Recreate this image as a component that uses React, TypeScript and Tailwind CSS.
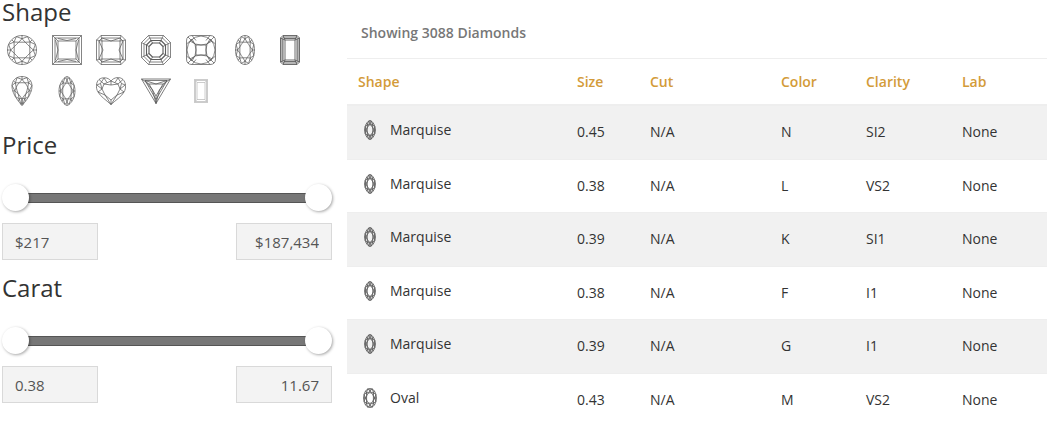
import React, { useState } from "react";

type Point = [number, number];
type Curve = (t: number, scale: number) => Point;

const TAU = Math.PI * 2;

const toPoints = (points: Point[]) =>
  points.map(([x, y]) => `${x.toFixed(2)},${y.toFixed(2)}`).join(" ");

// t runs clockwise from the top of the stone
const round: Curve = (t, s) => [15 + 14.5 * s * Math.sin(t), 15 - 14.5 * s * Math.cos(t)];
const oval: Curve = (t, s) => [15 + 9.5 * s * Math.sin(t), 15 - 14.5 * s * Math.cos(t)];
const marquise: Curve = (t, s) => [
  15 + 8 * s * Math.sin(t) * Math.abs(Math.sin(t)) ** 0.4,
  15 - 14.5 * s * Math.cos(t),
];
const pear: Curve = (t, s) => [
  15 + 13 * s * Math.sin(t) * Math.cos(t > Math.PI ? (TAU - t) / 2 : t / 2),
  14 + s - 14.5 * s * Math.cos(t),
];

const Brilliant = ({ curve }: { curve: Curve }) => {
  const outline = Array.from({ length: 64 }, (_, i) => curve((i * TAU) / 64, 1));
  const table = Array.from({ length: 16 }, (_, i) => curve((i * TAU) / 16, i % 2 ? 0.58 : 0.54));
  return (
    <>
      <polygon points={toPoints(outline)} />
      <polygon points={toPoints(table)} />
      {Array.from({ length: 8 }, (_, i) => {
        const at = (n: number, s: number) => curve((((n + 16) % 16) * TAU) / 16, s);
        const n = i * 2;
        return (
          <React.Fragment key={i}>
            <polyline points={toPoints([at(n - 1, 0.58), at(n, 0.78), at(n + 1, 0.58)])} />
            <polyline points={toPoints([at(n - 1, 1), at(n, 0.78), at(n + 1, 1)])} />
            <polyline points={toPoints([at(n, 0.78), at(n, 1)])} />
          </React.Fragment>
        );
      })}
    </>
  );
};

const drawings: Record<string, React.ReactNode> = {
  Round: <Brilliant curve={round} />,
  Princess: (
    <path d="M.5.5h29v29H.5zM3 3h24v24H3zM6 6h18v18H6zM.5.5 6 6M29.5.5 24 6M.5 29.5 6 24M29.5 29.5 24 24M6 3.5 15 5.500 24 3.500M6 26.500l9-2 9 2M3.500 5 6 15 3.500 25M26.500 5 24 15l2.500 10" />
  ),
  Radiant: (
    <path d="M5 .5h20l4.500 4.500v20L25 29.500H5L.5 25V5zM6 3h18l3 3v18l-3 3H6l-3-3V6zM6 6h18v18H6zM5 .5 6 6 .5 5M25 .5 24 6l5.500-1M5 29.500 6 24l-5.500 1M25 29.500 24 24l5.500 1M6 3l9 3 9-3M6 27l9-3 9 3M3 6l4 9-4 9M27 6l-4 9 4 9" />
  ),
  Asscher: (
    <>
      <path d="M7.500.5h15l7 7v15l-7 7h-15l-7-7v-15zM8.500 3h13l5.500 5.500v13L21.500 27h-13L3 21.500v-13z" />
      <path
        strokeWidth="1.1"
        d="M10 5.500h10l4.500 4.500v10L20 24.500H10L5.500 20V10zM11.500 8h7l3.500 3.500v7L18.500 22h-7L8 18.500v-7z"
      />
      <path d="m7.500.5 4 7.500M22.500.5l-4 7.500M29.500 7.500l-7.500 4M29.500 22.500l-7.500-4M22.500 29.500l-4-7.500M7.500 29.500l4-7.500M.5 22.500l7.500-4M.5 7.500l7.500 4" />
    </>
  ),
  Cushion: (
    <path d="M6 .5h18q5.500 0 5.500 5.500v18q0 5.500-5.500 5.500H6Q.5 29.500.5 24V6Q.5.5 6 .5zM10 10h10v10H10zM4 6Q9 1 15 1t11 5q-5 4-11 4T4 6zM4 24q5-4 11-4t11 4q-5 5-11 5T4 24zM6 4Q1 9 1 15t5 11q4-5 4-11T6 4zM24 4q5 5 5 11t-5 11q-4-5-4-11t4-11zM2 2l8 8M28 2l-8 8M2 28l8-8M28 28l-8-8M6 .5l4 5M24 .5l-4 5M6 29.500l4-5M24 29.500l-4-5M.5 9 4 6M29.500 9 26 6M.5 21 4 24M29.500 21 26 24" />
  ),
  Oval: <Brilliant curve={oval} />,
  Emerald: (
    <path
      strokeWidth="0.9"
      d="M8 .5h14l2.500 2.500v24L22 29.500H8L5.500 27V3zM8.500 2h13L23 3.500v23L21.500 28h-13L7 26.500v-23zM9 3.500h12l1 1v21l-1 1H9l-1-1v-21zM10 5h10v20H10zM8 .5 10 5 5.500 3M22 .5 20 5l4.500-2M8 29.500l2-4.500-4.500 2M22 29.500l-2-4.500 4.500 2"
    />
  ),
  Pear: <Brilliant curve={pear} />,
  Marquise: <Brilliant curve={marquise} />,
  Heart: (
    <path d="M15 5C12 1 6 1 3 3.500S-.5 12 2 16c2.500 4.500 8 8 13 12.500C20 24 25.500 20.500 28 16c2.500-4 2-9.500-1-12.500S18 1 15 5zM8 8l7 1 7-1 2 5-3 6-6 5-6-5-3-6zM15 5v4M15 5 8 8 3 3.500M15 5l7 3 5-4.500M8 2 4.500 7.500.8 9M22 2l3.500 5.500L29.200 9M8 2l3 4.500M22 2l-3 4.500M.8 9 6 13 2 16M29.200 9 24 13l4 3M4.500 7.500 6 13M25.500 7.500 24 13M2 16l7 3 6 9.500M28 16l-7 3-6 9.500M15 24v4.500" />
  ),
  Trillion: (
    <path
      strokeWidth="0.8"
      d="M.5 3h29L15 27.500zM4 4.500h22L15 23.500zM8 8h14L15 20zM.5 3 8 8M29.500 3 22 8M15 27.500V20M4 4.500 15 8l11-3.500M4 4.500 11.500 14 15 27.500 18.500 14 26 4.500"
    />
  ),
  Baguette: (
    <path
      stroke="#bbbbbb"
      d="M8.500 3.500h13v23h-13zM11 6.500h8v17h-8zM9.500 4.500h11v21h-11zM8.500 3.500l2.500 3M21.500 3.500l-2.500 3M8.500 26.500l2.500-3M21.500 26.500l-2.500-3"
    />
  ),
};

interface GemIconProps {
  shape: string;
  className?: string;
  strokeWidth?: number;
}

const GemIcon = ({ shape, className, strokeWidth = 0.75 }: GemIconProps) => (
  <svg
    viewBox="0 0 30 30"
    className={className}
    fill="none"
    stroke="#5c5c5c"
    strokeWidth={strokeWidth}
    strokeLinejoin="round"
    aria-hidden="true"
  >
    {drawings[shape]}
  </svg>
);

const shapes = [
  "Round",
  "Princess",
  "Radiant",
  "Asscher",
  "Cushion",
  "Oval",
  "Emerald",
  "Pear",
  "Marquise",
  "Heart",
  "Trillion",
  "Baguette",
];

const diamonds = [
  { id: 1, shape: "Marquise", size: "0.45", cut: "N/A", color: "N", clarity: "SI2", lab: "None" },
  { id: 2, shape: "Marquise", size: "0.38", cut: "N/A", color: "L", clarity: "VS2", lab: "None" },
  { id: 3, shape: "Marquise", size: "0.39", cut: "N/A", color: "K", clarity: "SI1", lab: "None" },
  { id: 4, shape: "Marquise", size: "0.38", cut: "N/A", color: "F", clarity: "I1", lab: "None" },
  { id: 5, shape: "Marquise", size: "0.39", cut: "N/A", color: "G", clarity: "I1", lab: "None" },
  { id: 6, shape: "Oval", size: "0.43", cut: "N/A", color: "M", clarity: "VS2", lab: "None" },
];

const rangeClass =
  "pointer-events-none absolute inset-0 h-full w-full appearance-none bg-transparent outline-none [&::-webkit-slider-thumb]:pointer-events-auto [&::-webkit-slider-thumb]:h-[27px] [&::-webkit-slider-thumb]:w-[27px] [&::-webkit-slider-thumb]:cursor-pointer [&::-webkit-slider-thumb]:appearance-none [&::-webkit-slider-thumb]:rounded-full [&::-webkit-slider-thumb]:bg-white [&::-webkit-slider-thumb]:shadow-[1px_1px_3px_rgba(0,0,0,0.35)]";

const fieldClass =
  "h-[37px] w-24 border border-[#d9d9d9] bg-[#f3f3f3] px-3 text-[15px] text-[#555555] outline-none";

interface RangeFilterProps {
  title: string;
  min: number;
  max: number;
  step: number;
  format: (value: number) => string;
}

const RangeFilter: React.FC<RangeFilterProps> = ({ title, min, max, step, format }) => {
  const [low, setLow] = useState(min);
  const [high, setHigh] = useState(max);

  return (
    <section className="pl-0.5">
      <h2 className="text-2xl leading-6">{title}</h2>
      <div className="relative mt-[27px] flex h-[27px] items-center px-3">
        <div className="h-2.5 w-full border-y border-[#555555] bg-[#777777]"></div>
        <input
          type="range"
          aria-label={`Minimum ${title}`}
          min={min}
          max={max}
          step={step}
          value={low}
          onChange={(e) => setLow(Math.min(Number(e.target.value), high))}
          className={rangeClass}
        />
        <input
          type="range"
          aria-label={`Maximum ${title}`}
          min={min}
          max={max}
          step={step}
          value={high}
          onChange={(e) => setHigh(Math.max(Number(e.target.value), low))}
          className={rangeClass}
        />
      </div>
      <div className="mt-3 flex justify-between">
        <input type="text" readOnly aria-label={`${title} from`} value={format(low)} className={fieldClass} />
        <input
          type="text"
          readOnly
          aria-label={`${title} to`}
          value={format(high)}
          className={`${fieldClass} text-right`}
        />
      </div>
    </section>
  );
};

const App: React.FC = () => {
  return (
    <div className="flex flex-col bg-white font-['Open_Sans',sans-serif] text-[#333333] sm:flex-row">
      <aside className="flex shrink-0 flex-col gap-4 pr-[15px] sm:w-[347px]">
        <section className="mb-[11px]">
          <h2 className="pl-0.5 text-2xl leading-6">Shape</h2>
          <div className="mt-[11px] mr-5 grid grid-cols-7 justify-items-center gap-y-[11px]">
            {shapes.map((shape) => (
              <button key={shape} type="button" aria-label={shape} className="cursor-pointer">
                <GemIcon shape={shape} className="h-[30px] w-[30px]" />
              </button>
            ))}
          </div>
        </section>
        <RangeFilter
          title="Price"
          min={217}
          max={187434}
          step={1}
          format={(value) => `$${value.toLocaleString("en-US")}`}
        />
        <RangeFilter title="Carat" min={0.38} max={11.67} step={0.01} format={(value) => value.toFixed(2)} />
      </aside>

      <main className="min-w-0 flex-1 text-sm">
        <p className="border-b border-[#eeeeee] px-[14px] pt-[23px] pb-[15px] font-semibold text-[#777777]">
          Showing 3088 Diamonds
        </p>
        <table className="w-full table-fixed text-left">
          <thead>
            <tr className="h-[46px] border-b-2 border-[#eeeeee] text-[#d39b39]">
              <th className="pl-[11px] font-semibold">Shape</th>
              <th className="w-[85px] pl-3 font-semibold">Size</th>
              <th className="w-[119px] font-semibold">Cut</th>
              <th className="w-[97px] pl-3 font-semibold">Color</th>
              <th className="w-[84px] font-semibold">Clarity</th>
              <th className="w-[97px] pl-3 font-semibold">Lab</th>
            </tr>
          </thead>
          <tbody>
            {diamonds.map((diamond) => (
              <tr
                key={diamond.id}
                className="border-b border-[#eeeeee] last:border-b-0 odd:h-[54px] odd:bg-[#f1f1f1] even:h-[53px]"
              >
                <td className="pb-1 pl-[11px]">
                  <div className="flex items-center gap-2">
                    <GemIcon shape={diamond.shape} strokeWidth={1.4} className="h-5 w-6" />
                    {diamond.shape}
                  </div>
                </td>
                <td className="pl-3">{diamond.size}</td>
                <td>{diamond.cut}</td>
                <td className="pl-3">{diamond.color}</td>
                <td>{diamond.clarity}</td>
                <td className="pl-3">{diamond.lab}</td>
              </tr>
            ))}
          </tbody>
        </table>
      </main>
    </div>
  );
};

export default App;
